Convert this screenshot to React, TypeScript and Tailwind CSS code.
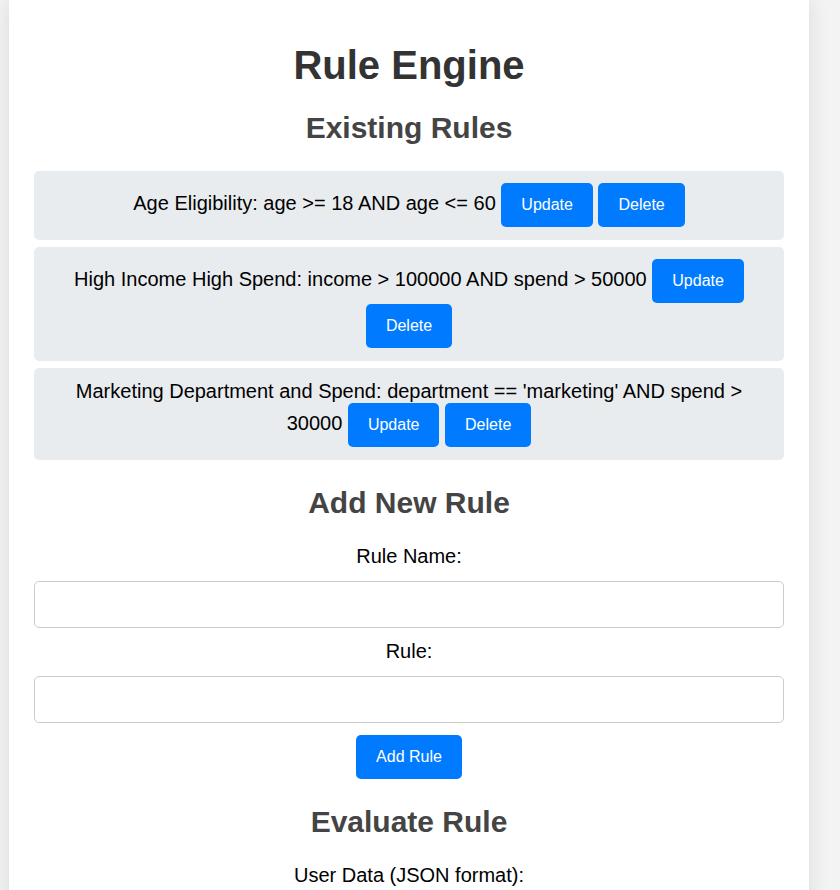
import React from "react";

const rules = [
  { name: "Age Eligibility", rule: "age >= 18 AND age <= 60" },
  { name: "High Income High Spend", rule: "income > 100000 AND spend > 50000" },
  {
    name: "Marketing Department and Spend",
    rule: "department == 'marketing' AND spend > 30000",
  },
];

function Btn({ children }: { children: React.ReactNode }) {
  return (
    <button className="inline-block h-[44px] mb-px px-[20px] leading-[44px] text-[16px] text-white bg-[#007bff] rounded-[5px] align-baseline">
      {children}
    </button>
  );
}

export default function App() {
  return (
    <div
      className="min-h-screen bg-[#f3f3f3] pl-[9px] overflow-hidden"
      style={{ fontFamily: '"Liberation Sans", Arial, sans-serif' }}
    >
      <div className="w-[800px] bg-white shadow-[0_0_20px_rgba(0,0,0,0.1)] px-[25px] pt-[42px] pb-[40px] text-center">
        <h1 className="text-[40px] leading-[46px] font-bold text-[#333]">Rule Engine</h1>
        <h2 className="mt-[23px] text-[30px] leading-[34.5px] font-bold text-[#444]">
          Existing Rules
        </h2>
        <div className="mt-[25px] flex flex-col gap-[7px]">
          {rules.map((r) => (
            <div
              key={r.name}
              className="bg-[#e9ecef] rounded-[5px] px-[15px] pt-[12px] pb-[12px] text-[20px] leading-[23px] text-black"
            >
              {r.name}: {r.rule} <Btn>Update</Btn> <Btn>Delete</Btn>
            </div>
          ))}
        </div>
        <h2 className="mt-[26px] text-[30px] leading-[34.5px] font-bold text-[#444]">
          Add New Rule
        </h2>
        <label className="block mt-[25px] text-[20px] leading-[23px] text-black">Rule Name:</label>
        <input
          type="text"
          className="block w-full mt-[13px] h-[47px] border border-[#ccc] rounded-[5px] px-[10px] text-[20px] outline-none"
        />
        <label className="block mt-[12px] text-[20px] leading-[23px] text-black">Rule:</label>
        <input
          type="text"
          className="block w-full mt-[13px] h-[47px] border border-[#ccc] rounded-[5px] px-[10px] text-[20px] outline-none"
        />
        <div className="mt-[12px]">
          <Btn>Add Rule</Btn>
        </div>
        <h2 className="mt-[25px] text-[30px] leading-[34.5px] font-bold text-[#444]">
          Evaluate Rule
        </h2>
        <label className="block mt-[24px] text-[20px] leading-[23px] text-black">
          User Data (JSON format):
        </label>
        <textarea className="block w-full mt-[13px] h-[120px] border border-[#ccc] rounded-[5px] p-[10px] text-[20px] outline-none resize-none" />
        <div className="mt-[12px]">
          <Btn>Evaluate</Btn>
        </div>
      </div>
    </div>
  );
}
